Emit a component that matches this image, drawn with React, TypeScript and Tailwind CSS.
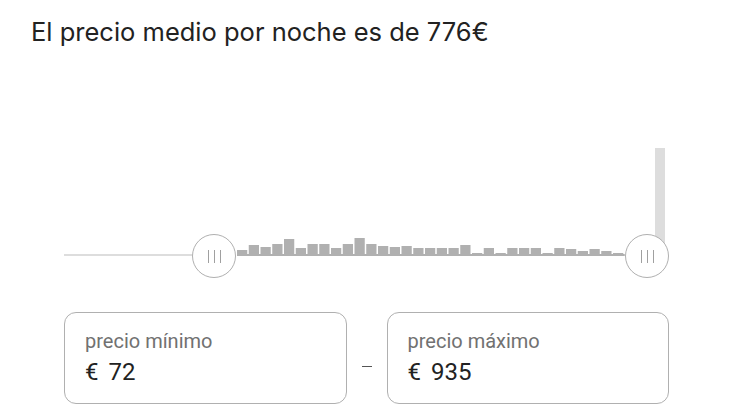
import React from "react";

// bucket heights of the price histogram, left to right
const bars = [6, 11, 9, 12, 17, 8, 12, 12, 8, 12, 18, 12, 10, 9, 10, 8, 8, 8, 8, 11, 3, 8, 3, 8, 8, 8, 3, 8, 7, 5, 7, 5, 3];

const BAR_START = 173;
const BAR_PITCH = 11.75;

function Thumb() {
  return (
    <div className="w-11 h-11 rounded-full border border-[#b0b0b0] bg-white flex items-center justify-center gap-[5px]">
      <span className="w-px h-[13px] bg-[#a0a0a0]" />
      <span className="w-px h-[13px] bg-[#a0a0a0]" />
      <span className="w-px h-[13px] bg-[#a0a0a0]" />
    </div>
  );
}

function PriceBox({ label, value }: { label: string; value: string }) {
  return (
    <div className="flex-1 h-[92px] rounded-xl border border-[#b0b0b0] px-[20px] pt-[16px]">
      <div className="text-[20px] leading-6 text-[#717171]">{label}</div>
      <div className="mt-[5px] text-[24px] leading-7 text-[#222222] [word-spacing:4px]">{value}</div>
    </div>
  );
}

export default function App() {
  return (
    <div className="w-[736px] h-[417px] bg-white overflow-hidden" style={{ fontFamily: "Roboto, 'Noto Sans', sans-serif" }}>
      <div
        className="pl-[31px] pt-[16px] text-[25.5px] leading-8 text-[#222222]"
        style={{ fontFamily: "Inter, Roboto, sans-serif" }}
      >
        El precio medio por noche es de 776€
      </div>

      <div className="relative ml-[64px] mt-[92px] w-[601px] h-[138px]">
        <svg width="601" height="117" viewBox="0 0 601 117" className="block">
          <rect x="0" y="114" width="130" height="2" fill="#dddddd" />
          <rect x="591" y="8" width="10" height="108" fill="#dddddd" />
          <rect x={BAR_START} y="114" width={bars.length * BAR_PITCH} height="2" fill="#b0b0b0" />
          {bars.map((h, i) => (
            <rect
              key={i}
              x={BAR_START + i * BAR_PITCH}
              y={116 - h}
              width={BAR_PITCH - 1.5}
              height={h}
              fill="#b0b0b0"
            />
          ))}
        </svg>
        <div className="absolute left-[128px] top-[94px]">
          <Thumb />
        </div>
        <div className="absolute left-[561px] top-[94px]">
          <Thumb />
        </div>
      </div>

      <div className="ml-[64px] mt-[34px] w-[605px] flex items-center">
        <PriceBox label="precio mínimo" value="€ 72" />
        <div className="w-10 flex justify-center pt-[16px]">
          <span className="w-[10px] h-px bg-[#555555]" />
        </div>
        <PriceBox label="precio máximo" value="€ 935" />
      </div>
    </div>
  );
}
